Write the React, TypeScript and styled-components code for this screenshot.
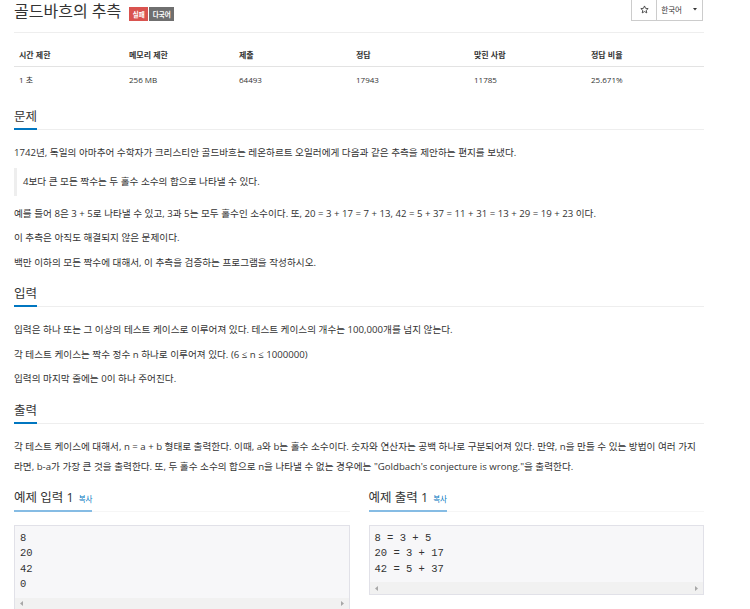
import React from 'react'
import styled, { createGlobalStyle } from 'styled-components'

const GlobalStyle = createGlobalStyle`
  html, body {
    margin: 0;
    padding: 0;
    background: #fff;
  }
  body {
    font-family: 'Open Sans', 'Noto Sans CJK KR', sans-serif;
    font-size: 9.65px;
    color: #333;
    overflow: hidden;
  }
`

const Page = styled.div`
  display: flex;
  flex-direction: column;
  width: 690px;
  margin-left: 14px;
`

const PageHeader = styled.header`
  display: flex;
  justify-content: space-between;
  align-items: flex-start;
  height: 32px;
  border-bottom: 1px solid #eee;
`

const TitleGroup = styled.div`
  display: flex;
  align-items: flex-start;
  gap: 1px;
`

const Title = styled.h1`
  margin: 0 7px 0 0;
  font-size: 16px;
  line-height: 22px;
  font-weight: 400;
`

const Label = styled.span<{ $tone: 'danger' | 'default' }>`
  display: inline-flex;
  align-items: center;
  height: 14px;
  margin-top: 7px;
  padding: 0 3.5px;
  font-size: 6.5px;
  font-weight: 700;
  color: #fff;
  background: ${(p) => (p.$tone === 'danger' ? '#d9534f' : '#6f6f6f')};
`

const ButtonGroup = styled.div`
  display: flex;
  margin-top: -3px;
  margin-right: 1px;
`

const HeaderButton = styled.button<{ $wide?: boolean }>`
  display: flex;
  align-items: center;
  gap: 11px;
  height: 24px;
  padding: ${(p) => (p.$wide ? '0 5px 0 4px' : '0 7px 0 8px')};
  border: 1px solid #ccc;
  background: #fff;
  color: #333;
  font-family: inherit;
  font-size: 7.5px;

  & + & {
    margin-left: -1px;
  }
`

const InfoTable = styled.div`
  display: grid;
  grid-template-columns: 110px 110px 117px 118px 117px 1fr;
  margin: 10px 0 9px;
`

const InfoCell = styled.div<{ $head?: boolean }>`
  display: flex;
  align-items: center;
  height: ${(p) => (p.$head ? '23px' : '24px')};
  padding: 0 5px;
  font-size: 8px;
  font-weight: ${(p) => (p.$head ? 700 : 400)};
  border-bottom: ${(p) => (p.$head ? '1px solid #e3e3e3' : 'none')};
`

const Section = styled.section`
  margin-top: 6px;
`

const Headline = styled.div<{ $soft?: boolean }>`
  border-bottom: 1px solid ${(p) => (p.$soft ? '#f6f6f6' : '#eee')};
  margin-bottom: 13px;
`

const HeadlineText = styled.h2<{ $soft?: boolean }>`
  display: inline-block;
  margin: 0 0 -1px;
  font-size: 12.5px;
  line-height: 22px;
  font-weight: 400;
  border-bottom: 2px solid ${(p) => (p.$soft ? '#86bce4' : '#0076c0')};
`

const CopyLink = styled.a`
  margin-left: 5px;
  font-size: 7.5px;
  color: #0076c0;
  text-decoration: none;
`

const Paragraph = styled.p`
  margin: 0 0 4.5px;
  line-height: 20px;
`

const Quote = styled.blockquote`
  margin: 0 0 8px;
  padding: 4px 0 4px 6px;
  border-left: 3px solid #eee;
  line-height: 20px;
`

const SampleGrid = styled.div`
  display: grid;
  grid-template-columns: 1fr 1fr;
  column-gap: 19px;
  margin-top: 6px;
`

const SampleBox = styled.div`
  margin-top: 2.5px;
  border: 1px solid #e1e1e8;
  background: #f7f7f9;
`

const SampleCode = styled.pre`
  margin: 0;
  padding: 4.5px 5px 5px;
  font-family: 'Liberation Mono', monospace;
  font-size: 10.5px;
  line-height: 15.5px;
  color: #333;
`

const ScrollTrack = styled.div`
  display: flex;
  justify-content: space-between;
  align-items: center;
  height: 12px;
  padding: 0 5px;
  background: #f1f1f1;
`

const Arrow = ({ dir }: { dir: 'left' | 'right' }) => (
  <svg width="3" height="5" viewBox="0 0 3 5">
    <path d={dir === 'left' ? 'M3 0 L0 2.5 L3 5 Z' : 'M0 0 L3 2.5 L0 5 Z'} fill="#a8a8a8" />
  </svg>
)

const StarIcon = () => (
  <svg width="9" height="9" viewBox="0 0 24 24">
    <path
      d="M12 2.5 L14.9 8.9 L21.8 9.6 L16.6 14.2 L18.1 21 L12 17.5 L5.9 21 L7.4 14.2 L2.2 9.6 L9.1 8.9 Z"
      fill="none"
      stroke="#333"
      strokeWidth="2.2"
      strokeLinejoin="round"
    />
  </svg>
)

const Caret = () => (
  <svg width="4" height="3" viewBox="0 0 4 3">
    <path d="M0 0 L4 0 L2 2.5 Z" fill="#333" />
  </svg>
)

const stats = [
  ['시간 제한', '1 초'],
  ['메모리 제한', '256 MB'],
  ['제출', '64493'],
  ['정답', '17943'],
  ['맞힌 사람', '11785'],
  ['정답 비율', '25.671%'],
]

const samples = [
  { title: '예제 입력 1', code: '8\n20\n42\n0' },
  { title: '예제 출력 1', code: '8 = 3 + 5\n20 = 3 + 17\n42 = 5 + 37' },
]

export default function App() {
  return (
    <>
      <GlobalStyle />
      <Page>
        <PageHeader>
          <TitleGroup>
            <Title>골드바흐의 추측</Title>
            <Label $tone="danger">실패</Label>
            <Label $tone="default">다국어</Label>
          </TitleGroup>
          <ButtonGroup>
            <HeaderButton>
              <StarIcon />
            </HeaderButton>
            <HeaderButton $wide>
              한국어 <Caret />
            </HeaderButton>
          </ButtonGroup>
        </PageHeader>

        <InfoTable>
          {stats.map(([head]) => (
            <InfoCell key={head} $head>
              {head}
            </InfoCell>
          ))}
          {stats.map(([head, value]) => (
            <InfoCell key={head + value}>{value}</InfoCell>
          ))}
        </InfoTable>

        <Section>
          <Headline>
            <HeadlineText>문제</HeadlineText>
          </Headline>
          <Paragraph>
            1742년, 독일의 아마추어 수학자가 크리스티안 골드바흐는 레온하르트 오일러에게 다음과 같은 추측을 제안하는
            편지를 보냈다.
          </Paragraph>
          <Quote>4보다 큰 모든 짝수는 두 홀수 소수의 합으로 나타낼 수 있다.</Quote>
          <Paragraph>
            예를 들어 8은 3 + 5로 나타낼 수 있고, 3과 5는 모두 홀수인 소수이다. 또, 20 = 3 + 17 = 7 + 13, 42 = 5 +
            37 = 11 + 31 = 13 + 29 = 19 + 23 이다.
          </Paragraph>
          <Paragraph>이 추측은 아직도 해결되지 않은 문제이다.</Paragraph>
          <Paragraph>백만 이하의 모든 짝수에 대해서, 이 추측을 검증하는 프로그램을 작성하시오.</Paragraph>
        </Section>

        <Section>
          <Headline>
            <HeadlineText>입력</HeadlineText>
          </Headline>
          <Paragraph>
            입력은 하나 또는 그 이상의 테스트 케이스로 이루어져 있다. 테스트 케이스의 개수는 100,000개를 넘지 않는다.
          </Paragraph>
          <Paragraph>각 테스트 케이스는 짝수 정수 n 하나로 이루어져 있다. (6 ≤ n ≤ 1000000)</Paragraph>
          <Paragraph>입력의 마지막 줄에는 0이 하나 주어진다.</Paragraph>
        </Section>

        <Section>
          <Headline>
            <HeadlineText>출력</HeadlineText>
          </Headline>
          <Paragraph>
            각 테스트 케이스에 대해서, n = a + b 형태로 출력한다. 이때, a와 b는 홀수 소수이다. 숫자와 연산자는 공백
            하나로 구분되어져 있다. 만약, n을 만들 수 있는 방법이 여러 가지라면, b-a가 가장 큰 것을 출력한다. 또, 두
            홀수 소수의 합으로 n을 나타낼 수 없는 경우에는 "Goldbach's conjecture is wrong."을 출력한다.
          </Paragraph>
        </Section>

        <SampleGrid>
          {samples.map((s) => (
            <div key={s.title}>
              <Headline $soft>
                <HeadlineText $soft>
                  {s.title}
                  <CopyLink href="#">복사</CopyLink>
                </HeadlineText>
              </Headline>
              <SampleBox>
                <SampleCode>{s.code}</SampleCode>
                <ScrollTrack>
                  <Arrow dir="left" />
                  <Arrow dir="right" />
                </ScrollTrack>
              </SampleBox>
            </div>
          ))}
        </SampleGrid>
      </Page>
    </>
  )
}
